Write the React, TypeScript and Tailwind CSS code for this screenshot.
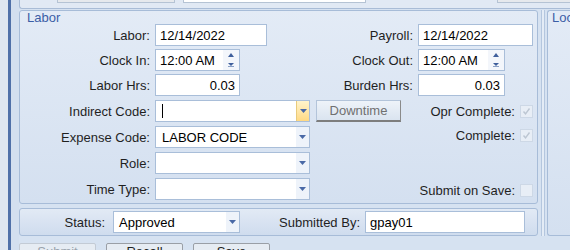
import type { ReactNode } from "react";

const Arrow = ({ color = "#4a69a6" }: { color?: string }) => (
  <svg width="7" height="4" viewBox="0 0 7 4">
    <path d="M0 0H7L3.5 4Z" fill={color} />
  </svg>
);

function Label({ w, children }: { w: string; children: ReactNode }) {
  return <div className={`${w} shrink-0 text-right whitespace-nowrap`}>{children}</div>;
}

function TextBox({ w, children, right }: { w: string; children?: ReactNode; right?: boolean }) {
  return (
    <div
      className={`${w} ml-[5px] h-[22px] shrink-0 border border-[#a9bed9] bg-white flex items-center px-[4px] text-black ${
        right ? "justify-end" : ""
      }`}
    >
      {children}
    </div>
  );
}

function SpinBox({ w, children }: { w: string; children: ReactNode }) {
  return (
    <div className={`${w} ml-[5px] h-[22px] shrink-0 border border-[#a9bed9] bg-white flex items-center text-black`}>
      <span className="flex-1 pl-[4px]">{children}</span>
      <div className="w-[16px] h-full bg-[#f3f6fb] flex flex-col items-center justify-center gap-[6px]">
        <svg width="6" height="4" viewBox="0 0 6 4">
          <path d="M0 4H6L3 0Z" fill="#3f5f9c" />
        </svg>
        <svg width="6" height="4" viewBox="0 0 6 4">
          <path d="M0 0H6L3 3Z" fill="#3f5f9c" />
          <path d="M0 3.5H6" stroke="#8aa0c6" strokeWidth="1" />
        </svg>
      </div>
    </div>
  );
}

function Combo({ w, children, hot }: { w: string; children?: ReactNode; hot?: boolean }) {
  return (
    <div className={`${w} ml-[5px] h-[22px] shrink-0 border border-[#a9bed9] bg-white flex items-center text-black`}>
      <div className="flex-1 pl-[6px] flex items-center overflow-hidden whitespace-nowrap">{children}</div>
      <div
        className={`w-[13px] h-full flex items-center justify-center ${
          hot ? "bg-gradient-to-b from-[#fff4cc] to-[#ffd983] border-l border-[#e9cb7c]" : "bg-[#eef3fa]"
        }`}
      >
        <Arrow />
      </div>
    </div>
  );
}

function Check() {
  return (
    <div className="ml-[5px] w-[13px] h-[13px] shrink-0 border border-[#cdd8e6] bg-[#e8eef6] flex items-center justify-center">
      <svg width="9" height="9" viewBox="0 0 9 9">
        <path d="M1.5 4.5L3.5 6.8L7.5 1.5" fill="none" stroke="#bcc6d2" strokeWidth="1.4" />
      </svg>
    </div>
  );
}

function EmptyCheck() {
  return <div className="ml-[5px] w-[13px] h-[13px] shrink-0 border border-[#cdd8e6] bg-[#e8eef6]" />;
}

export default function App() {
  return (
    <div className="w-[570px] h-[250px] overflow-hidden flex bg-[#d6e2f1] text-[13px] leading-[15px] text-[#1f1f1f] font-['Liberation_Sans',Arial,sans-serif]">
      {/* left frame edge */}
      <div className="w-[8px] shrink-0 bg-[#dee6f0]" />
      <div className="w-[3px] shrink-0 bg-[#4f70a8]" />
      <div className="w-[8px] shrink-0 bg-[#d3dfef]" />

      <div className="flex-1 flex flex-col min-w-0">
        {/* bottom of the panel above */}
        <div className="h-[9px] shrink-0 border-b border-l border-[#a9bcd6] rounded-bl-[3px] bg-[#e1e9f4] flex items-start">
          <div className="ml-[37px] w-[118px] h-[3px] border-x border-b border-[#b5c3d4] bg-[#e6e9ed]" />
          <div className="ml-[8px] w-[183px] h-[3px] border-x border-b border-[#b5c3d4] bg-white" />
          <div className="ml-[131px] flex-1 h-[3px] border-l border-b border-[#b5c3d4] bg-[#e6e9ed]" />
        </div>

        <div className="flex mt-[1px]">
          <div className="w-[519px] shrink-0 flex flex-col">
            {/* Labor group */}
            <div className="h-[194px] border border-[#a7bcd8] rounded-[3px] bg-gradient-to-b from-[#e3ebf6] to-[#d4e0f0] flex flex-col">
              <div className="pl-[7px] leading-[13px] text-[#3c5ea6]">Labor</div>

              <div className="flex items-center h-[22px]">
                <Label w="w-[130px]">Labor:</Label>
                <TextBox w="w-[112px]">12/14/2022</TextBox>
                <div className="w-[23px] shrink-0" />
                <Label w="w-[123px]">Payroll:</Label>
                <TextBox w="w-[115px]">12/14/2022</TextBox>
              </div>

              <div className="flex items-center h-[22px] mt-[3px]">
                <Label w="w-[130px]">Clock In:</Label>
                <SpinBox w="w-[85px]">12:00 AM</SpinBox>
                <div className="w-[50px] shrink-0" />
                <Label w="w-[123px]">Clock Out:</Label>
                <SpinBox w="w-[87px]">12:00 AM</SpinBox>
              </div>

              <div className="flex items-center h-[22px] mt-[3px]">
                <Label w="w-[130px]">Labor Hrs:</Label>
                <TextBox w="w-[85px]" right>
                  0.03
                </TextBox>
                <div className="w-[50px] shrink-0" />
                <Label w="w-[123px]">Burden Hrs:</Label>
                <TextBox w="w-[87px]" right>
                  0.03
                </TextBox>
              </div>

              <div className="flex items-center h-[22px] mt-[4px]">
                <Label w="w-[130px]">Indirect Code:</Label>
                <Combo w="w-[155px]" hot>
                  <div className="w-px h-[14px] bg-black" />
                </Combo>
                <button className="ml-[6px] w-[85px] h-[22px] shrink-0 border border-[#b3c4da] border-r-[#8a8a8a] border-b-2 border-b-[#7d7d7d] bg-gradient-to-b from-[#eef3f9] to-[#dae4f0] text-[#707070]">
                  Downtime
                </button>
                <div className="flex-1 text-right whitespace-nowrap">Opr Complete:</div>
                <Check />
                <div className="w-[4px] shrink-0" />
              </div>

              <div className="flex items-center h-[22px] mt-[4px]">
                <Label w="w-[130px]">Expense Code:</Label>
                <Combo w="w-[155px]">LABOR CODE</Combo>
                <div className="flex-1 flex items-center justify-end mb-[4px]">
                  <span className="whitespace-nowrap">Complete:</span>
                  <Check />
                </div>
                <div className="w-[4px] shrink-0" />
              </div>

              <div className="flex items-center h-[22px] mt-[4px]">
                <Label w="w-[130px]">Role:</Label>
                <Combo w="w-[155px]" />
              </div>

              <div className="flex items-center h-[22px] mt-[4px]">
                <Label w="w-[130px]">Time Type:</Label>
                <Combo w="w-[155px]" />
                <div className="flex-1 flex items-center justify-end mt-[2px]">
                  <span className="whitespace-nowrap">Submit on Save:</span>
                  <EmptyCheck />
                </div>
                <div className="w-[4px] shrink-0" />
              </div>
            </div>

            {/* status strip */}
            <div className="mt-[4px] h-[28px] border border-[#a7bcd8] rounded-[3px] bg-gradient-to-b from-[#e2eaf5] to-[#cfdcee] flex items-center">
              <Label w="w-[85px]">Status:</Label>
              <div className="ml-[3px]" />
              <Combo w="w-[127px]">
                <span className="-ml-[1px]">Approved</span>
              </Combo>
              <Label w="w-[120px]">Submitted By:</Label>
              <TextBox w="w-[160px]">gpay01</TextBox>
            </div>
          </div>

          {/* splitter */}
          <div className="w-[9px] shrink-0 flex justify-center">
            <div className="w-[4px] h-[226px] border-x border-[#b4c6de] bg-[#e4ecf6]" />
          </div>

          {/* Loc group */}
          <div className="flex-1 h-[226px] border-l border-t border-b border-[#a7bcd8] rounded-l-[3px] bg-gradient-to-b from-[#e3ebf6] to-[#d4e0f0] overflow-hidden">
            <div className="pl-[4px] leading-[13px] text-[#3c5ea6]">Location</div>
          </div>
        </div>

        {/* bottom buttons */}
        <div className="flex gap-[10px] mt-[7px]">
          <button className="w-[77px] h-[23px] shrink-0 border border-[#c3cbd5] rounded-[2px] bg-[#e6ecf3] text-[#9aa3ad] flex justify-center items-start">
            Submit
          </button>
          <button className="w-[77px] h-[23px] shrink-0 border border-[#9a9fa6] rounded-[2px] bg-[#e6ecf3] text-[#1f1f1f] flex justify-center items-start">
            Recall
          </button>
          <button className="w-[77px] h-[23px] shrink-0 border border-[#9a9fa6] rounded-[2px] bg-[#e6ecf3] text-[#1f1f1f] flex justify-center items-start">
            Save
          </button>
        </div>
      </div>
    </div>
  );
}
